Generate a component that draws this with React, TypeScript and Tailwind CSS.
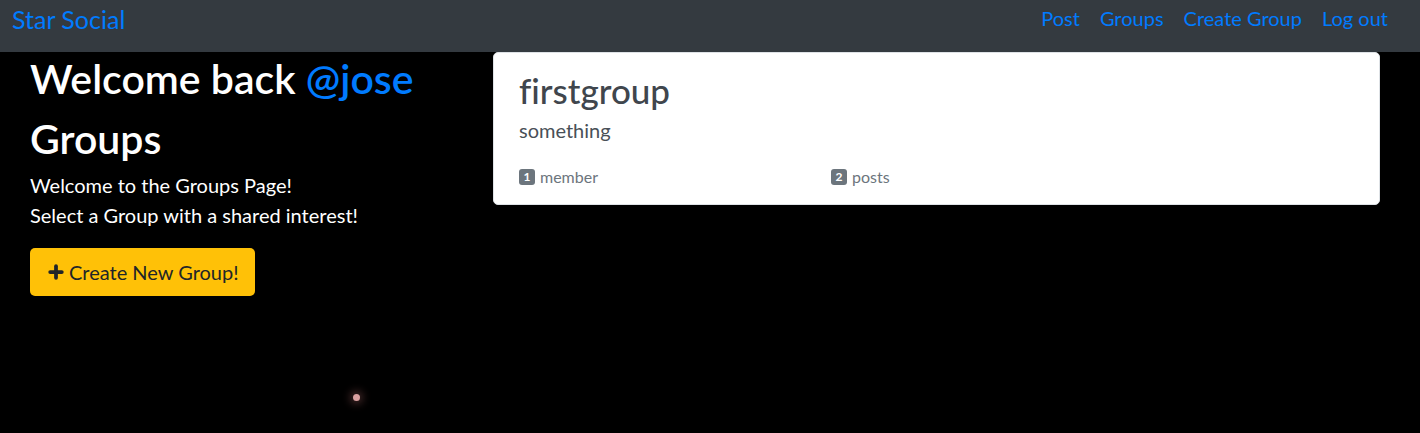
import { Plus } from "lucide-react";

const font = { fontFamily: '"Segoe UI", Lato, "Noto Sans", sans-serif', fontVariantLigatures: "none" as const };

function Navbar() {
  return (
    <nav className="flex h-[52px] items-center justify-between bg-[#343a40] pl-3 pr-8">
      <a className="text-[25px] leading-none text-[#007bff] pb-[14px]">Star Social</a>
      <ul className="flex items-center gap-5 pb-[16px] text-[20px] leading-none text-[#007bff]">
        <li>Post</li>
        <li>Groups</li>
        <li>Create Group</li>
        <li>Log out</li>
      </ul>
    </nav>
  );
}

function Badge({ n }: { n: number }) {
  return (
    <span className="flex h-4 w-4 items-center justify-center rounded-[3px] bg-[#6c757d] text-[12px] font-bold leading-none text-white">
      {n}
    </span>
  );
}

function GroupCard() {
  return (
    <div className="rounded-[5px] border border-[#dee2e6] bg-white px-[25px] pb-[17px] pt-[16px]">
      <h3 className="text-[35px] font-medium leading-[1.2] text-[#40464d]">firstgroup</h3>
      <p className="mt-[4px] text-[20px] leading-[30px] text-[#495057]">something</p>
      <div className="mt-[22px] grid grid-cols-[312px_1fr] text-[16px] leading-5 text-[#6c757d]">
        <span className="flex items-center gap-[5px]">
          <Badge n={1} />
          member
        </span>
        <span className="flex items-center gap-[5px]">
          <Badge n={2} />
          posts
        </span>
      </div>
    </div>
  );
}

export default function App() {
  return (
    <div className="relative h-[433px] overflow-hidden bg-black" style={font}>
      <Navbar />
      <div className="flex gap-[22px] pl-[30px] pr-10">
        <div className="w-[441px] shrink-0 text-white">
          <h1 className="text-[41px] font-semibold leading-[50px] pt-[2px]">
            Welcome back <span className="text-[#007bff]">@jose</span>
          </h1>
          <h2 className="mt-[10px] text-[41px] font-semibold leading-[50px]">Groups</h2>
          <p className="mt-[6px] text-[20px] leading-[30px]">Welcome to the Groups Page!</p>
          <p className="text-[20px] leading-[30px]">Select a Group with a shared interest!</p>
          <button className="mt-[18px] flex h-[48px] items-center gap-[3px] rounded-[5px] bg-[#ffc107] px-[16px] text-[20px] text-[#212529]">
            <Plus size={20} strokeWidth={4.5} />
            Create New Group!
          </button>
        </div>
        <div className="flex-1">
          <GroupCard />
        </div>
      </div>
      <span className="absolute left-[353px] top-[394px] h-[7px] w-[7px] rounded-full bg-[#d9a0a0] shadow-[0_0_8px_3px_rgba(200,120,120,0.35)]" />
    </div>
  );
}
